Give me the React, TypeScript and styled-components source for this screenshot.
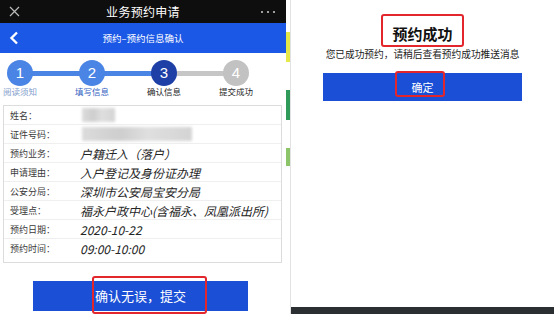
import React from "react";
import styled, { createGlobalStyle } from "styled-components";

const Global = createGlobalStyle`
  html, body { margin: 0; padding: 0; background: #fff; }
  body {
    width: 554px; height: 314px; overflow: hidden;
    font-family: "Noto Sans CJK SC", "Noto Sans", sans-serif;
  }
`;

const Page = styled.div`
  display: flex;
  width: 554px;
  height: 314px;
`;

const Phone = styled.div`
  width: 286px;
  display: flex;
  flex-direction: column;
  background: #fff;
`;

const TopBar = styled.div`
  height: 23px;
  background: #0e0e0e;
  display: grid;
  grid-template-columns: 1fr auto 1fr;
  align-items: center;
  padding: 0 9px;
  color: #fff;
`;

const TopTitle = styled.div`
  font-size: 12px;
  line-height: 23px;
  letter-spacing: 0.3px;
`;

const Dots = styled.div`
  justify-self: end;
  display: flex;
  gap: 4px;
  padding-right: 2px;
`;

const Dot = styled.span`
  width: 2px;
  height: 2px;
  border-radius: 50%;
  background: #cfcfcf;
`;

const NavBar = styled.div`
  height: 30px;
  background: #1b58e6;
  display: grid;
  grid-template-columns: 1fr auto 1fr;
  align-items: center;
  padding: 0 9px;
  color: #fff;
`;

const NavTitle = styled.div`
  font-size: 9.5px;
  line-height: 30px;
`;

const Stepper = styled.div`
  height: 50px;
  display: grid;
  grid-template-columns: repeat(4, 72px);
  margin-left: -16px;
  padding-top: 7px;
  box-sizing: border-box;
`;

const Step = styled.div<{ $line?: string }>`
  position: relative;
  display: flex;
  flex-direction: column;
  align-items: center;
  &::after {
    content: "";
    display: ${(p) => (p.$line ? "block" : "none")};
    position: absolute;
    top: 10.5px;
    left: 50%;
    width: 72px;
    height: 5px;
    background: ${(p) => p.$line};
    z-index: 0;
  }
`;

const Circle = styled.div<{ $fill: string }>`
  position: relative;
  z-index: 1;
  width: 26px;
  height: 26px;
  border-radius: 50%;
  background: ${(p) => p.$fill};
  color: #fff;
  font-family: "Liberation Sans", Arial, sans-serif;
  font-size: 15px;
  line-height: 26px;
  text-align: center;
`;

const StepLabel = styled.div<{ $color: string }>`
  font-size: 8.5px;
  line-height: 11px;
  color: ${(p) => p.$color};
  white-space: nowrap;
`;

const InfoBox = styled.div`
  margin: 2px 4px 0 3px;
  border: 1px solid #dcdcdc;
  padding-bottom: 4px;
`;

const InfoRow = styled.div`
  height: 19px;
  display: flex;
  align-items: center;
  box-sizing: border-box;
  border-bottom: 1px solid #efefef;
  &:last-child { border-bottom: none; }
`;

const Label = styled.div`
  width: 70px;
  padding-left: 6px;
  box-sizing: border-box;
  font-size: 9px;
  color: #3a3a3a;
  white-space: nowrap;
`;

const Value = styled.div`
  font-size: 12px;
  font-style: italic;
  color: #262626;
  white-space: nowrap;
  margin-left: 6px;
`;

const Blur = styled.div<{ $w: number }>`
  width: ${(p) => p.$w}px;
  height: 14px;
  margin-left: 8px;
  background: linear-gradient(90deg, #d8d8d8 0%, #c9c9c9 35%, #dcdcdc 60%, #cfcfcf 100%);
  filter: blur(1.5px);
  opacity: 0.9;
`;

const SubmitButton = styled.div`
  position: relative;
  margin: 18px 0 0 33px;
  width: 215px;
  height: 30px;
  background: #1a4fd6;
  color: #fff;
  font-size: 13px;
  line-height: 30px;
  text-align: center;
`;

const RedBox = styled.div<{ $l: number; $t: number; $w: number; $h: number }>`
  position: absolute;
  left: ${(p) => p.$l}px;
  top: ${(p) => p.$t}px;
  width: ${(p) => p.$w}px;
  height: ${(p) => p.$h}px;
  border: 2px solid #e2262b;
  border-radius: 3px;
  box-sizing: border-box;
  pointer-events: none;
`;

const Strip = styled.div`
  width: 4px;
  display: flex;
  flex-direction: column;
  border-right: 1px solid #e2e2e2;
`;

const Seg = styled.div<{ $h: number; $c: string }>`
  height: ${(p) => p.$h}px;
  background: ${(p) => p.$c};
`;

const Success = styled.div`
  flex: 1;
  display: flex;
  flex-direction: column;
  align-items: center;
`;

const SuccessTitle = styled.div`
  margin-top: 14px;
  border: 2px solid #e2262b;
  border-radius: 3px;
  padding: 6px 9px 0;
  font-size: 15px;
  font-weight: 700;
  line-height: 23px;
  color: #111;
`;

const SuccessText = styled.div`
  margin-top: 1px;
  font-size: 9.7px;
  line-height: 12px;
  color: #222;
  white-space: nowrap;
`;

const OkButton = styled.div`
  position: relative;
  margin-top: 13px;
  width: 199px;
  height: 28px;
  background: #1a4fd6;
  color: #fff;
  font-size: 11px;
  line-height: 28px;
  text-align: center;
`;

const Footer = styled.div`
  margin-top: auto;
  align-self: stretch;
  height: 7px;
  background: #2b2f31;
`;

const steps = [
  { n: 1, label: "阅读须知", fill: "#4a84e4", color: "#7f9ccc", line: "#4a84e4" },
  { n: 2, label: "填写信息", fill: "#4a84e4", color: "#3462c4", line: "#4a84e4" },
  { n: 3, label: "确认信息", fill: "#1d3fa6", color: "#1e1e1e", line: "#c6c6c6" },
  { n: 4, label: "提交成功", fill: "#c2c2c2", color: "#1e1e1e" },
];

const rows: { label: string; value?: string; blur?: number }[] = [
  { label: "姓名：", blur: 33 },
  { label: "证件号码：", blur: 110 },
  { label: "预约业务：", value: "户籍迁入（落户）" },
  { label: "申请理由：", value: "入户登记及身份证办理" },
  { label: "公安分局：", value: "深圳市公安局宝安分局" },
  { label: "受理点：", value: "福永户政中心(含福永、凤凰派出所)" },
  { label: "预约日期：", value: "2020-10-22" },
  { label: "预约时间：", value: "09:00-10:00" },
];

export default function App() {
  return (
    <>
      <Global />
      <Page>
        <Phone>
          <TopBar>
            <svg width="11" height="11" viewBox="0 0 11 11">
              <path d="M1 1 L10 10 M10 1 L1 10" stroke="#bbb" strokeWidth="1.2" />
            </svg>
            <TopTitle>业务预约申请</TopTitle>
            <Dots>
              <Dot />
              <Dot />
              <Dot />
            </Dots>
          </TopBar>
          <NavBar>
            <svg width="10" height="14" viewBox="0 0 10 14">
              <path d="M8 1.5 L2.5 7 L8 12.5" stroke="#fff" strokeWidth="2.4" fill="none" />
            </svg>
            <NavTitle>预约–预约信息确认</NavTitle>
            <span />
          </NavBar>
          <Stepper>
            {steps.map((s) => (
              <Step key={s.n} $line={s.line}>
                <Circle $fill={s.fill}>{s.n}</Circle>
                <StepLabel $color={s.color}>{s.label}</StepLabel>
              </Step>
            ))}
          </Stepper>
          <InfoBox>
            {rows.map((r) => (
              <InfoRow key={r.label}>
                <Label>{r.label}</Label>
                {r.blur ? <Blur $w={r.blur} /> : <Value>{r.value}</Value>}
              </InfoRow>
            ))}
          </InfoBox>
          <SubmitButton>
            确认无误，提交
            <RedBox $l={59} $t={-5} $w={115} $h={38} />
          </SubmitButton>
        </Phone>
        <Strip>
          <Seg $h={32} $c="#ffffff" />
          <Seg $h={30} $c="#e6e84a" />
          <Seg $h={28} $c="#ffffff" />
          <Seg $h={30} $c="#2f9a5a" />
          <Seg $h={28} $c="#ffffff" />
          <Seg $h={18} $c="#8cc46a" />
          <Seg $h={148} $c="#ffffff" />
        </Strip>
        <Success>
          <SuccessTitle>预约成功</SuccessTitle>
          <SuccessText>您已成功预约，请稍后查看预约成功推送消息</SuccessText>
          <OkButton>
            确定
            <RedBox $l={72} $t={-2} $w={50} $h={26} />
          </OkButton>
          <Footer />
        </Success>
      </Page>
    </>
  );
}
